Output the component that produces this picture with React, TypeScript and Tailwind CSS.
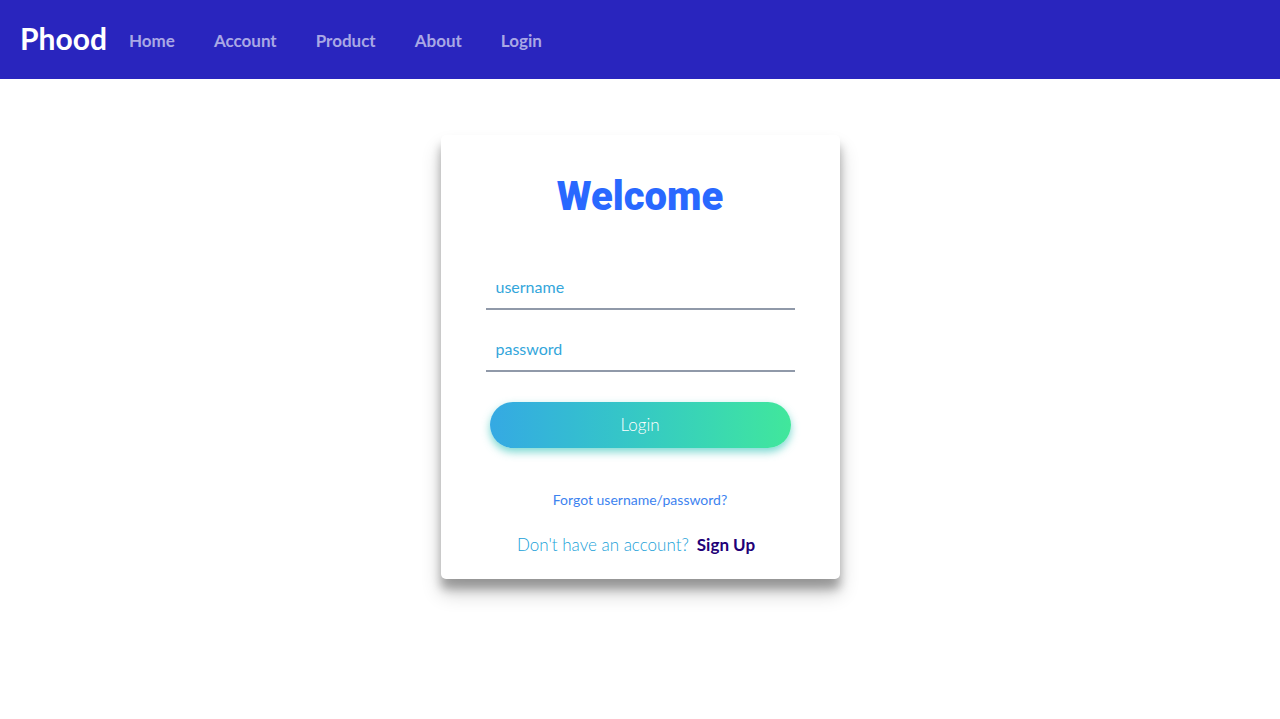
const links = ["Home", "Account", "Product", "About", "Login"];

const fieldClass =
  "block h-12 w-full border-b-2 border-[#9099a9] bg-white px-2.5 pt-0.5 font-['Lato',sans-serif] text-base text-[#33aadd] outline-none placeholder:text-[#33a6db]";

export default function App() {
  return (
    <div className="min-h-screen bg-white font-['Lato',sans-serif]">
      <nav className="flex h-[79px] items-center bg-[#2925be] px-5">
        <a href="#" className="pb-1 text-[30px] leading-10 font-bold text-white">Phood</a>
        <ul className="ml-[22px] flex gap-[39px] pt-0.5">
          {links.map((label) => (
            <li key={label}>
              <a href="#" className="text-[17px] leading-6 font-bold text-[#a9a8e5]">{label}</a>
            </li>
          ))}
        </ul>
      </nav>
      <main className="flex justify-center px-4 pt-14">
        <form
          className="w-full max-w-[399px] rounded-[5px] bg-white px-[45px] pt-[34px] pb-[22px] shadow-[0_14px_20px_rgba(0,0,0,0.2),0_10px_10px_rgba(0,0,0,0.28)]"
          onSubmit={(event) => event.preventDefault()}
        >
          <h1 className="text-center font-['Roboto',sans-serif] text-[40px] leading-14 font-black text-[#2968ff]">
            Welcome
          </h1>
          <div className="mt-[37px] flex flex-col gap-3.5">
            <input aria-label="username" placeholder="username" type="text" className={fieldClass} />
            <input aria-label="password" placeholder="password" type="password" className={fieldClass} />
          </div>
          <div className="mt-[30px] px-1">
            <button
              type="submit"
              className="h-[46px] w-full rounded-full bg-linear-to-r from-[#35a9e3] to-[#41e79b] pb-px text-[17px] font-light text-white shadow-[0_4px_8px_rgba(65,200,190,0.7)]"
            >
              Login
            </button>
          </div>
          <p className="mt-10 text-center text-sm leading-6">
            <a href="#" className="text-[#3d83f0]">Forgot username/password?</a>
          </p>
          <p className="mt-[21px] flex justify-center gap-2 pr-2 text-[17px] leading-6 text-[#209fd8]">
            <span className="font-light">Don't have an account?</span>
            <a href="#" className="font-bold text-[#220077]">Sign Up</a>
          </p>
        </form>
      </main>
    </div>
  );
}
